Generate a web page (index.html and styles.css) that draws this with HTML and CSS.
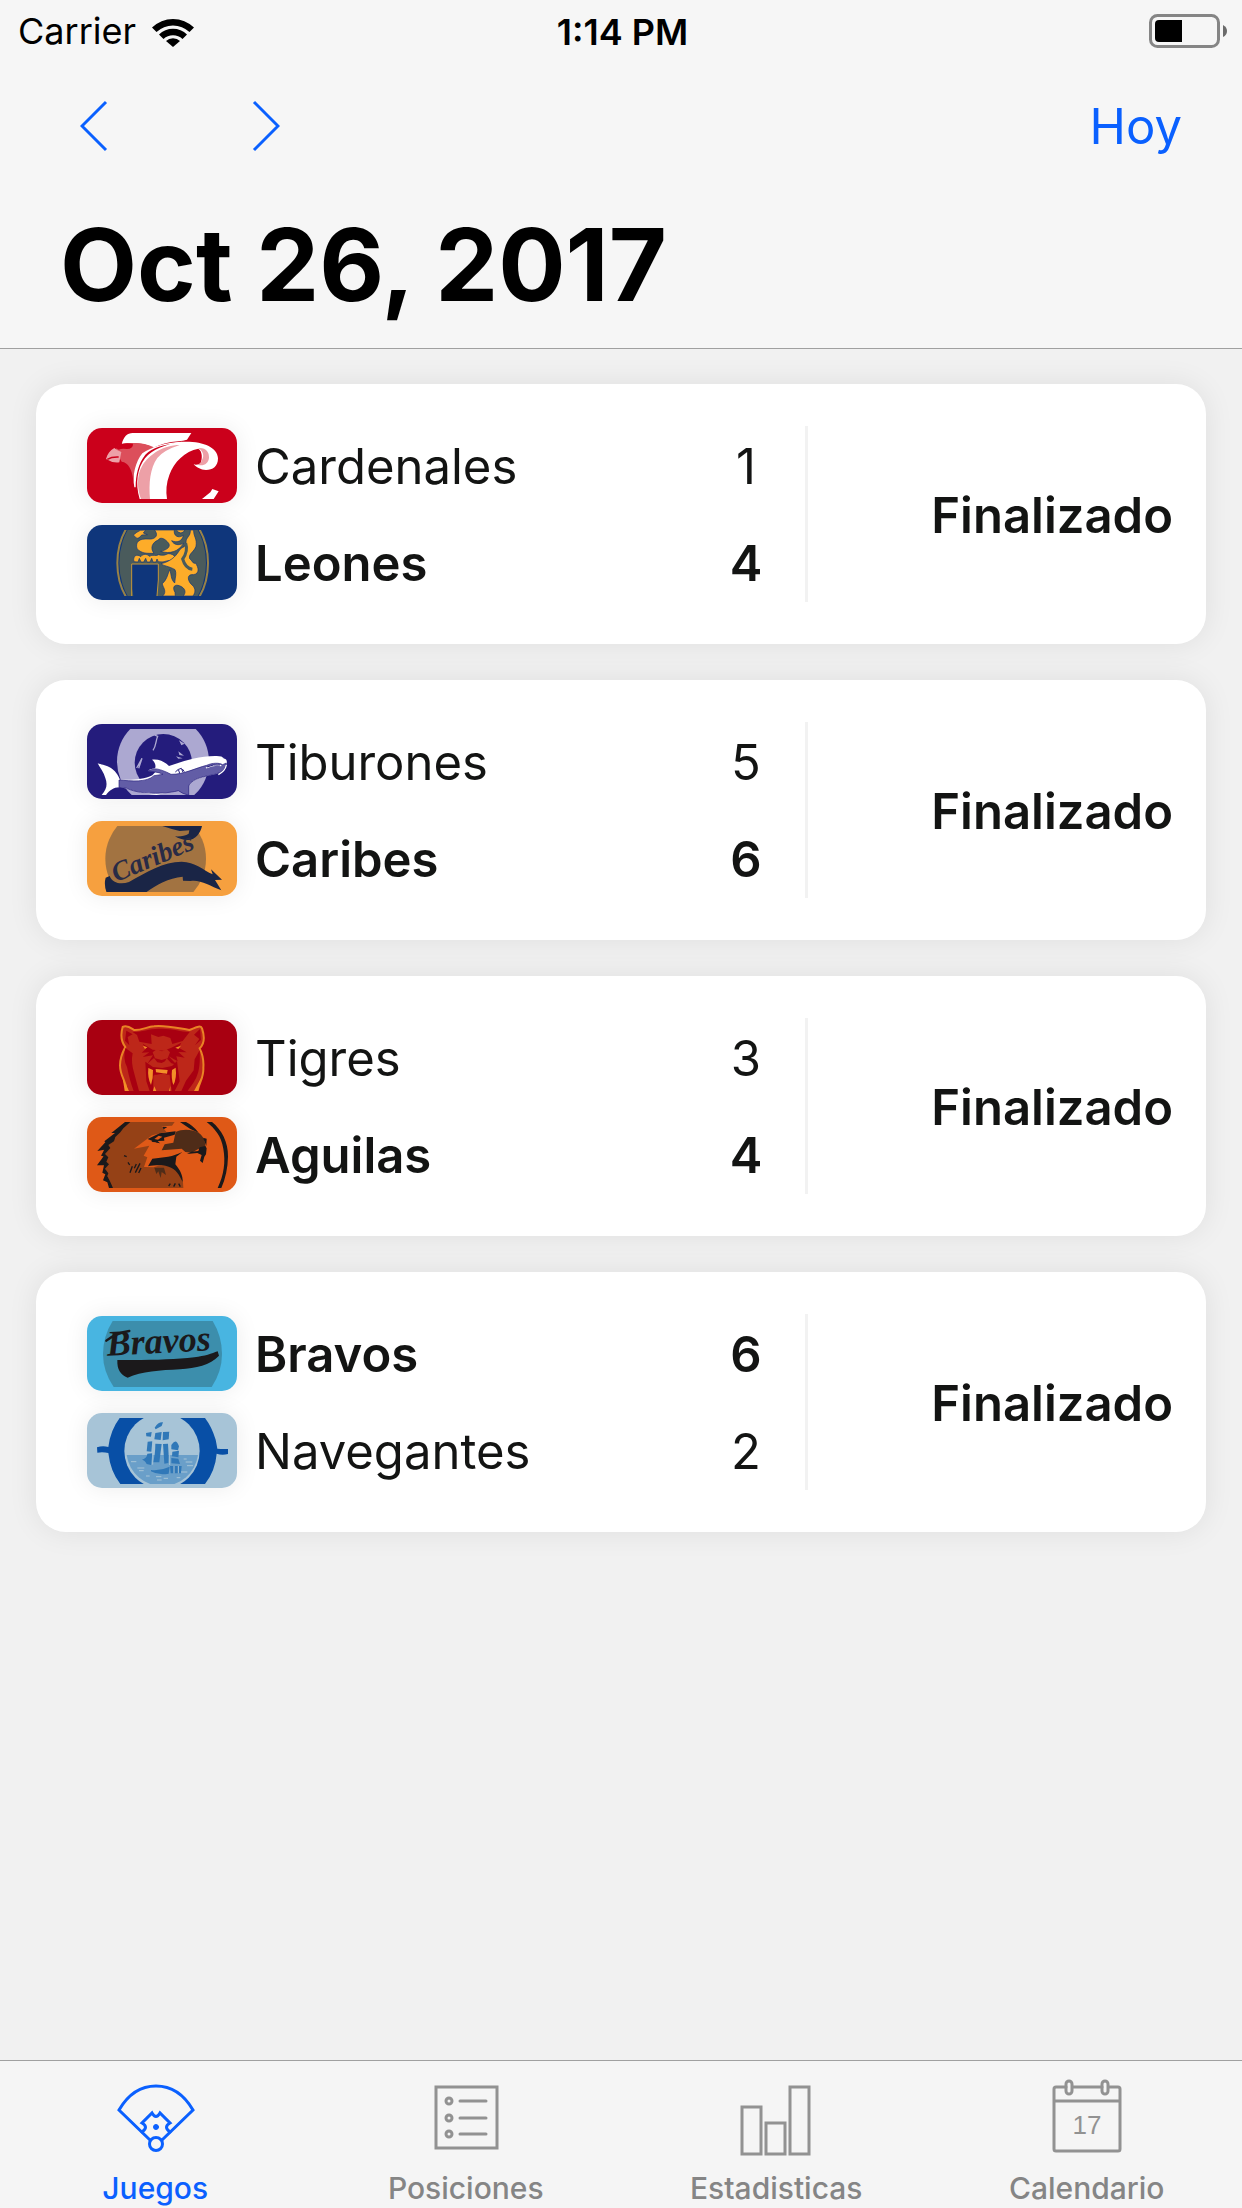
FILE: index.html
```html
<!DOCTYPE html>
<html lang="es">
<head>
  <meta charset="UTF-8">
  <meta name="viewport" content="width=device-width, initial-scale=1.0">
  <title>Juegos</title>
  <link rel="stylesheet" href="styles.css">
</head>
<body>
<header class="header">
  <div class="status-bar">
    <div class="carrier">
      <span>Carrier</span>
      <svg class="wifi" viewBox="0 0 42 31" aria-hidden="true">
        <path d="M0 11.500 A30 30 0 0 1 42 11.500 L37.500 16 A24 24 0 0 0 4.500 16Z"/>
        <path d="M7 18.500 A20 20 0 0 1 35 18.500 L30.500 23 A14 14 0 0 0 11.500 23Z"/>
        <path d="M14 25 A10 10 0 0 1 28 25 L21 31Z"/>
      </svg>
    </div>
    <span class="time">1:14 PM</span>
    <svg class="battery" viewBox="0 0 78 34" aria-hidden="true">
      <rect x="1.500" y="1.500" width="68" height="31" rx="7" fill="none" stroke="#858585" stroke-width="3"/>
      <path d="M10 6 H33 V28 H10 Q6 28 6 24 V10 Q6 6 10 6Z"/>
      <path d="M74 11 Q78 13 78 17 T74 23Z" fill="#6b6b6b"/>
    </svg>
  </div>
  <div class="toolbar">
    <button type="button" class="arrow-button" aria-label="Anterior">
      <svg viewBox="0 0 28 52"><path d="M26 2 L2 26 L26 50"/></svg>
    </button>
    <button type="button" class="arrow-button" aria-label="Siguiente">
      <svg viewBox="0 0 28 52"><path d="M2 2 L26 26 L2 50"/></svg>
    </button>
    <button type="button" class="today-button">Hoy</button>
  </div>
  <h1>Oct 26, 2017</h1>
</header>

<main class="games">
  <article class="game">
    <div class="teams">
      <div class="team">
        <svg class="badge" viewBox="51 54 450 225" aria-hidden="true">
          <rect x="51" y="54" width="450" height="225" fill="#cb001b"/>
          <path fill="#fff" d="M155 104 C160 80 172 69 188 69 H364 L351 89 Q340 93 325 94 C295 96 270 104 250 113 C225 99 185 96 155 104Z"/>
          <path fill="#dc4f5b" d="M148 106 C165 95 225 96 252 112 C225 125 208 145 189 205 C186 180 175 157 155 155 L135 120Z"/>
          <path fill="#cb001b" d="M150 103 Q165 98 189 101 Q190 116 171 117 Q155 114 146 119 L138 114Z"/>
          <path fill="#eda0a7" d="M133 114 Q140 121 154 126 L148 157 Q128 160 108 147 C112 132 120 121 133 114Z"/>
          <path stroke="#cb001b" stroke-width="4" fill="none" d="M112 148 Q125 140 146 141"/>
          <path fill="#fff" d="M217 130 C197 155 186 195 193 232 L197 232 C197 195 205 160 226 134 C250 112 275 104 330 100 L336 95 C285 98 245 110 217 130Z"/>
          <path fill="#fff" d="M330 96 C395 92 442 110 444 145 C444 170 428 180 408 180 C392 179 378 172 371 162 Q384 168 392 160 C397 145 398 125 385 116 C345 124 312 155 298 195 Q285 230 291 267 H209 C195 220 202 175 225 145 C248 117 285 104 330 96Z"/>
          <path fill="#eda0a7" d="M329 105 C280 105 238 134 218 165 C198 195 202 240 213 267 H240 C236 220 240 175 262 144 Q280 121 329 105Z"/>
          <path fill="#eda0a7" d="M385 114 C408 112 418 126 417 144 C415 162 398 172 376 162 Q392 165 396 150 C404 137 399 123 385 114Z"/>
          <path fill="#fff" d="M396 267 L421 247 L427 237 L446 244 L431 267Z"/>
        </svg>
        <span class="name">Cardenales</span>
        <span class="score">1</span>
      </div>
      <div class="team winner">
        <svg class="badge" viewBox="51 345 450 225" aria-hidden="true">
          <clipPath id="leonesClip"><rect x="51" y="360" width="450" height="198"/></clipPath>
          <rect x="51" y="345" width="450" height="225" fill="#0f367b"/>
          <g clip-path="url(#leonesClip)">
            <ellipse cx="278" cy="459" rx="136" ry="172" fill="#0f367b" stroke="#988247" stroke-width="6"/>
            <ellipse cx="278" cy="459" rx="130" ry="168" fill="#4a5b5c"/>
            <g fill="#fdac29" stroke="#0f367b" stroke-width="2">
              <path d="M190 375 Q200 366 211 361 L227 360 L220 369 L232 374 L215 375 Q205 389 198 383Z"/>
              <path d="M254 360 H313 C310 378 325 386 340 376 C337 393 322 400 305 392 C312 405 325 407 341 400 C325 425 300 433 272 424 C293 419 302 410 296 400 C285 385 270 380 265 390 C246 397 240 415 252 430 C232 430 216 432 201 416 C195 395 209 385 234 387 C251 389 269 380 254 360Z"/>
              <path d="M319 360 H345 Q333 378 319 360Z"/>
              <path d="M192 455 C187 437 202 431 212 440 C220 430 232 432 238 439 C248 432 258 440 265 434 C280 438 289 434 294 431 C315 431 319 445 318 456 Q305 447 294 452 Q278 458 265 455 L261 447 L258 456 H249 L245 445 L240 456 H231 L227 445 L221 456 H213 L208 445 L204 456Z"/>
              <path d="M361 360 H371 C370 380 382 385 378 409 C373 425 354 432 359 446 C368 454 370 463 376 459 C386 471 390 492 370 494 C350 492 353 510 362 521 C376 532 379 544 369 558 H340 C352 543 341 530 324 526 C310 524 308 535 315 547 L316 558 H278 C293 544 277 530 277 521 C290 510 292 496 299 479 C305 493 301 506 314 519 C316 500 320 490 315 479 C296 468 280 468 273 461 C300 455 316 441 327 423 C335 408 346 416 348 398 C347 381 362 381 361 360Z"/>
            </g>
            <path d="M347 400 Q355 424 338 447 Q346 475 367 478" fill="none" stroke="#4a5b5c" stroke-width="9"/>
            <path d="M184 462 H266 V510 L261 558 H190 L184 525Z" fill="#0f367b"/>
            <path d="M185 558 V462 H265 V510 L261 558" fill="none" stroke="#c89836" stroke-width="3"/>
          </g>
        </svg>
        <span class="name">Leones</span>
        <span class="score">4</span>
      </div>
    </div>
    <div class="result">Finalizado</div>
  </article>

  <article class="game">
    <div class="teams">
      <div class="team">
        <svg class="badge" viewBox="51 54 450 225" aria-hidden="true">
          <clipPath id="tiburonesClip"><rect x="51" y="69" width="450" height="198"/></clipPath>
          <rect x="51" y="54" width="450" height="225" fill="#241c7c"/>
          <g clip-path="url(#tiburonesClip)">
            <circle cx="279" cy="166" r="138" fill="#aca8d1"/>
            <circle cx="280" cy="170" r="86" fill="#241c7c"/>
            <path d="M200 186 L216 157 L206 187 M249 133 C259 120 257 104 263 91 L254 87" fill="none" stroke="#aca8d1" stroke-width="4"/>
            <path d="M327 103 L344 113 L334 118Z M318 151 L338 157 L325 158Z M325 136 L342 149 L328 147Z" fill="#aca8d1"/>
            <path fill="#fff" d="M83 172 C103 179 132 178 150 221 C185 222 220 222 247 208 L258 196 L234 193 L256 185 C258 174 252 166 246 161 C270 159 284 168 297 180 C340 166 385 149 440 150 C466 151 475 162 469 178 C461 196 446 205 421 208 C385 216 360 227 351 245 L260 267 C221 265 190 252 150 244 C132 243 119 253 108 267 H95 C112 249 112 232 106 216 C102 199 90 186 83 172Z"/>
            <path fill="#625da6" stroke="#241c7c" stroke-width="2" d="M147 222 C185 225 229 230 252 209 L279 205 C265 197 245 197 232 197 L251 188 C267 188 286 196 303 205 C340 206 380 185 410 178 C427 170 448 170 458 176 L469 171 C469 192 447 204 421 208 C388 213 361 225 356 240 V268 Q337 263 325 254 C300 261 220 270 170 247 L147 244Z"/>
            <path fill="none" stroke="#fff" stroke-width="4" d="M408 186 Q433 174 454 179 M445 206 Q466 195 469 177"/>
            <path fill="none" stroke="#241c7c" stroke-width="3" d="M316 198 L325 190 L329 202 M326 190 L334 187 L339 199 M337 189 L343 197"/>
            <path fill="none" stroke="#241c7c" stroke-width="3" d="M411 183 Q430 174 450 177 M458 154 L469 159"/>
          </g>
        </svg>
        <span class="name">Tiburones</span>
        <span class="score">5</span>
      </div>
      <div class="team winner">
        <svg class="badge" viewBox="51 345 450 225" aria-hidden="true">
          <clipPath id="caribesClip"><rect x="51" y="360" width="450" height="198"/></clipPath>
          <rect x="51" y="345" width="450" height="225" fill="#f6a03f"/>
          <g clip-path="url(#caribesClip)">
            <circle cx="257" cy="458" r="151" fill="#a27341"/>
            <path fill="#1a2546" d="M277 360 H396 C392 380 377 402 354 402 C337 402 325 397 315 391 Q340 393 356 383 L358 373 L329 375 Q300 368 277 360Z"/>
            <path fill="#1a2546" d="M107 515 L119 510 C127 531 152 537 177 528 C230 498 280 467 335 467 C375 468 400 492 428 505 L423 490 L456 521 L435 522 L454 553 C420 540 390 520 362 525 L339 524 L338 512 C295 516 255 539 227 560 H110 Q101 536 107 515Z"/>
            <text class="caribes-text" transform="rotate(-23 140 528)" x="138" y="528">Caribes</text>
          </g>
        </svg>
        <span class="name">Caribes</span>
        <span class="score">6</span>
      </div>
    </div>
    <div class="result">Finalizado</div>
  </article>

  <article class="game">
    <div class="teams">
      <div class="team">
        <svg class="badge" viewBox="51 54 450 225" aria-hidden="true">
          <clipPath id="tigresClip"><rect x="51" y="69" width="450" height="198"/></clipPath>
          <rect x="51" y="54" width="450" height="225" fill="#a80011"/>
          <g clip-path="url(#tigresClip)">
            <path fill="#bd2719" stroke="#e98325" stroke-width="6" d="M170 275 C174 240 150 229 150 190 C150 165 158 150 166 135 C153 118 151 99 158 75 C172 68 184 79 192 84 C215 85 232 74 252 73 C285 69 320 78 358 84 C373 79 391 67 396 79 C403 100 405 124 389 139 C397 155 402 171 400 197 C402 229 385 244 381 275Z"/>
            <path fill="#a80011" d="M188 90 C215 91 238 79 270 80 C310 79 330 89 359 90 L338 117 L307 126 L301 108 L280 101 L265 105 L243 97 L245 126 L208 119 L201 99Z"/>
            <path fill="#a80011" d="M169 86 L188 97 L173 105 L178 130 L165 116Z M390 81 L372 98 L388 111 L375 130 L393 114Z M166 138 Q158 171 171 195 Q180 239 191 267 H207 Q199 237 193 215 Q182 181 188 154Z M389 145 L374 172 L371 205 L348 236 L334 267 H353 C375 236 393 220 389 145Z"/>
            <path fill="#a80011" d="M218 125 L248 143 L267 145 L281 146 L304 137 L334 122 L326 137 L350 151 L325 150 L344 167 L319 163 L323 178 L296 163 L320 188 L304 184 L290 169 L285 178 L275 183 L262 181 L252 168 L232 185 L249 160 L218 165 L238 151 L215 152 L227 141Z"/>
            <path fill="#bd2719" d="M248 151 L260 142 L276 148 L290 141 L300 151 L293 169 L275 174 L255 169Z"/>
            <path fill="#a80011" d="M226 179 L249 195 L277 198 L306 192 L321 177 L329 238 L314 267 H305 L299 223 L281 214 L250 221 L250 267 H239 L229 238Z"/>
            <path fill="#bd2719" d="M253 218 H299 V267 H250Z"/>
            <g fill="#f39028">
              <path d="M257 201 L293 204 L291 215 L258 211Z M235 198 L249 204 Q250 229 243 249 Q232 227 235 198Z M306 204 L317 197 Q321 229 310 249 Q303 229 306 204Z M249 267 L253 253 L259 267Z M297 267 L301 252 V267Z"/>
              <path d="M219 131 L232 136 L225 141Z M333 131 L316 137 L325 141Z M158 228 L164 267 H177Z M393 228 L384 267 H372Z"/>
            </g>
          </g>
        </svg>
        <span class="name">Tigres</span>
        <span class="score">3</span>
      </div>
      <div class="team winner">
        <svg class="badge" viewBox="51 345 450 225" aria-hidden="true">
          <rect x="51" y="345" width="450" height="225" fill="#df5917"/>
          <path fill="#954116" d="M174 360 H314 L306 371 L275 373 L289 389 L246 400 L192 440 L238 431 L221 461 L232 466 L222 495 L250 496 Q280 484 316 496 Q341 520 340 558 H125 L108 510 L98 470 L103 426 L132 405Z"/>
          <path fill="#1b191b" d="M165 360 H181 L160 379 L151 391 L136 405 L132 418 L115 429 L121 438 L105 456 L115 466 L109 479 L117 487 L105 500 L115 514 L112 522 L121 540 L129 558 H117 L112 541 L99 535 L106 517 L97 512 L102 490 L81 490 L101 463 L93 461 L103 443 L82 447 L106 421 L103 418 L135 393 L124 393Z"/>
          <path fill="#1b191b" d="M410 360 H426 C455 383 475 421 474 464 Q473 514 454 558 H443 C462 518 467 479 460 440 C454 402 434 379 410 360Z"/>
          <path fill="#4f2c18" d="M317 390 C338 380 365 382 386 392 C407 407 407 429 407 454 L394 452 L386 440 L365 452 L346 450 L335 440 L275 445 L284 427 L310 422Z"/>
          <path fill="#1b191b" d="M330 360 H348 Q370 371 386 392 L361 381Z M233 411 L269 394 L317 388 L314 398 L282 407 L283 416 L263 417 L270 424 L260 422Z M248 411 L254 421 L245 419Z M277 374 L292 375 L281 382Z"/>
          <path fill="#df5917" d="M253 411 L266 401 L277 404 L264 413Z"/>
          <path fill="#1b191b" d="M234 493 L247 470 C280 467 310 464 337 450 L319 464 L316 487 C331 505 339 521 338 540 C328 518 317 500 296 494 C277 488 253 490 234 493Z"/>
          <path fill="#1b191b" d="M389 436 L406 432 L410 439 L408 457 L403 464 L398 483 L390 476 L395 459 L382 453 L351 456 L364 449 L385 447Z M399 407 L410 410 L409 432Z"/>
          <path fill="#4f2c18" d="M253 497 L282 497 L288 519 L275 510 L272 528 L265 508 L259 516Z"/>
          <path fill="none" stroke="#1b191b" stroke-width="4" d="M162 461 L170 464 M174 481 L179 489 M187 493 L180 512 M199 486 L193 499 M210 484 L196 512 M213 498 L206 513 M296 552 L301 545 M311 554 L316 544 M326 545 L331 554"/>
        </svg>
        <span class="name">Aguilas</span>
        <span class="score">4</span>
      </div>
    </div>
    <div class="result">Finalizado</div>
  </article>

  <article class="game">
    <div class="teams">
      <div class="team winner">
        <svg class="badge" viewBox="51 54 450 225" aria-hidden="true">
          <rect x="51" y="54" width="450" height="225" fill="#48b5e1"/>
          <path fill="#3c8eac" d="M128 69 H428 Q456 115 456 168 Q456 220 425 267 H131 Q99 220 99 168 Q99 115 128 69Z"/>
          <path fill="#1b191b" d="M142 186 C240 187 310 185 373 178 C405 174 425 167 443 160 L447 173 C420 202 378 210 330 214 C270 217 215 220 173 239 C151 230 141 215 142 186Z"/>
          <text class="bravos-text" transform="rotate(-3 115 175)" x="112" y="173">Bravos</text>
          <path fill="none" stroke="#1b191b" stroke-width="7" stroke-linecap="round" d="M109 128 Q140 104 178 99"/>
        </svg>
        <span class="name">Bravos</span>
        <span class="score">6</span>
      </div>
      <div class="team">
        <svg class="badge" viewBox="51 345 450 225" aria-hidden="true">
          <clipPath id="navegantesClip"><rect x="51" y="360" width="450" height="198"/></clipPath>
          <rect x="51" y="345" width="450" height="225" fill="#a7c4d7"/>
          <path fill="#084fa6" d="M149 360 H405 Q425 386 437 425 Q440 440 442 452 Q457 454 474 453 V468 Q456 473 440 467 Q436 518 405 558 H151 Q121 520 115 465 Q98 461 82 464 L81 448 Q98 442 115 447 Q121 397 149 360Z"/>
          <g clip-path="url(#navegantesClip)">
            <circle cx="276" cy="459" r="113" fill="#a7c4d7"/>
            <path d="M170 471 H384 A108 108 0 0 1 170 471Z" fill="#6a9fc9"/>
          </g>
          <g fill="#3078b8">
            <path d="M254 389 Q265 371 279 373 L275 384 L257 394Z M228 405 L245 402 L243 416 L229 415Z M256 405 L275 402 L272 426 L253 424Z M279 402 L298 401 L296 424 L278 427Z M233 431 L247 430 L244 461 L230 460Z M256 437 L275 438 L268 493 H249 Q256 470 256 437Z M279 438 L294 437 Q297 469 295 495 L283 497Z M304 441 Q318 418 327 445 L324 457 L304 454Z M307 461 L327 458 L325 478 L306 475Z M232 467 L247 466 L243 501 L230 498 Q224 486 216 485 Q231 480 232 467Z M304 480 L325 482 L330 498 L304 496Z"/>
            <path d="M243 516 Q272 519 299 506 L296 527 Q265 533 243 520Z M300 504 H335 L333 526 H302Z"/>
          </g>
          <g stroke="#a7c4d7" stroke-width="3" fill="none">
            <path d="M312 504 V526 M325 504 V526 M250 401 L248 500 M299 404 V501 M183 491 H199 M202 510 H223 M207 518 H221 M347 492 H367 M351 503 H369 M333 522 H352 M258 536 H274 M281 541 H294 M261 546 H275 M341 483 H350 M228 534 H239 M320 539 H331"/>
          </g>
        </svg>
        <span class="name">Navegantes</span>
        <span class="score">2</span>
      </div>
    </div>
    <div class="result">Finalizado</div>
  </article>
</main>

<nav class="tab-bar">
  <a href="#juegos" class="tab active">
    <svg viewBox="0 0 78 78" aria-hidden="true">
      <path d="M34 57 L3 27 Q17 3 40 3 T77 27 L46 57"/>
      <path d="M26 49 Q33 44 26 40 L36 30 Q40 37 44 30 L54 40 Q47 44 54 49"/>
      <circle cx="40" cy="61" r="6.500"/>
      <circle cx="40" cy="44" r="2.500" fill="currentColor" stroke-width="1"/>
    </svg>
    <span>Juegos</span>
  </a>
  <a href="#posiciones" class="tab">
    <svg viewBox="0 0 78 78" aria-hidden="true">
      <rect x="9" y="4" width="61" height="61"/>
      <circle cx="22" cy="18" r="3"/><circle cx="22" cy="35" r="3"/><circle cx="22" cy="51" r="3"/>
      <path d="M33 18 H59 M33 35 H59 M33 51 H59"/>
    </svg>
    <span>Posiciones</span>
  </a>
  <a href="#estadisticas" class="tab">
    <svg viewBox="0 0 78 78" aria-hidden="true">
      <path d="M5 24 H24 V71 H5Z M29 40 H48 V71 H29Z M53 4 H72 V71 H53Z"/>
    </svg>
    <span>Estadisticas</span>
  </a>
  <a href="#calendario" class="tab">
    <svg viewBox="0 0 78 78" aria-hidden="true">
      <path d="M18 4 H8 Q6 4 6 6 V66 Q6 68 8 68 H70 Q72 68 72 66 V6 Q72 4 70 4 H61 M25 4 H54 M6 18 H72"/>
      <rect x="18" y="-2" width="6" height="13" rx="3"/>
      <rect x="54" y="-2" width="6" height="13" rx="3"/>
      <text class="day" x="39" y="51">17</text>
    </svg>
    <span>Calendario</span>
  </a>
</nav>
</body>
</html>
```
FILE: styles.css
```css
* {
  box-sizing: border-box;
}

body {
  margin: 0;
  min-height: 100vh;
  display: flex;
  flex-direction: column;
  font-family: Inter, "Liberation Sans", sans-serif;
  background-color: #f1f1f1;
  color: #131413;
}

.header {
  background-color: #f6f6f6;
  border-bottom: 1px solid #a0a0a0;
  color: #000;
}

.status-bar {
  display: grid;
  grid-template-columns: 1fr auto 1fr;
  align-items: center;
  height: 60px;
  padding: 0 15px 0 18px;
  font-size: 36px;
  line-height: 60px;
}

.carrier {
  display: flex;
  align-items: center;
  gap: 16px;
}

.wifi {
  width: 42px;
  height: 31px;
}

.time {
  padding-top: 2px;
  font-weight: 600;
}

.battery {
  justify-self: end;
  width: 78px;
  height: 34px;
}

.toolbar {
  display: flex;
  align-items: center;
  gap: 144px;
  height: 132px;
  padding: 0 60px 0 80px;
}

.arrow-button,
.today-button {
  padding: 0;
  border: none;
  background: none;
  color: #0a60ff;
  cursor: pointer;
}

.arrow-button svg {
  display: block;
  width: 28px;
  height: 52px;
  fill: none;
  stroke: currentColor;
  stroke-width: 3;
}

.today-button {
  margin-left: auto;
  font-family: inherit;
  font-size: 49px;
}

h1 {
  margin: 0;
  padding: 13px 60px 23px;
  font-size: 100px;
  font-weight: 700;
  line-height: 120px;
}

.games {
  flex: 1;
  display: flex;
  flex-direction: column;
  gap: 36px;
  padding: 35px 36px;
}

.game {
  display: grid;
  grid-template-columns: 721fr 365fr;
  align-items: center;
  padding: 42px 33px 42px 51px;
  border-radius: 30px;
  background-color: #fff;
  box-shadow: 0 0 30px rgba(0, 0, 0, 0.08);
}

.teams {
  display: flex;
  flex-direction: column;
  gap: 22px;
  padding: 2px 42px 2px 0;
  border-right: 3px solid #f2f2f2;
}

.team {
  display: flex;
  align-items: center;
  gap: 18px;
  font-size: 49px;
  line-height: 72px;
}

.winner,
.result {
  font-weight: 600;
}

.badge {
  flex: none;
  width: 150px;
  height: 75px;
  border-radius: 15px;
  box-shadow: 0 0 24px rgba(0, 0, 0, 0.08);
}

.name {
  flex: 1;
  padding-top: 3px;
}

.score {
  width: 34px;
  padding-top: 3px;
  text-align: center;
}

.result {
  padding-top: 3px;
  font-size: 49px;
  line-height: 60px;
  text-align: right;
}

.caribes-text {
  font: italic 700 82px "Liberation Serif", serif;
  fill: #292b46;
}

.bravos-text {
  font: italic 700 108px "Liberation Serif", serif;
  fill: #1b191b;
}

.tab-bar {
  display: flex;
  height: 148px;
  border-top: 1px solid #a0a0a0;
  background-color: #f5f5f5;
}

.tab {
  flex: 1;
  display: flex;
  flex-direction: column;
  align-items: center;
  padding-top: 22px;
  color: #858585;
  font-size: 30px;
  font-weight: 500;
  line-height: 36px;
  text-decoration: none;
}

.tab svg {
  width: 78px;
  height: 78px;
  margin-bottom: 9px;
  overflow: visible;
  fill: none;
  stroke: #929292;
  stroke-width: 3;
  stroke-linecap: round;
}

.tab.active {
  color: #0a60ff;
}

.tab.active svg {
  stroke: currentColor;
}

.day {
  font: 26px "Liberation Sans", sans-serif;
  text-anchor: middle;
  fill: #929292;
  stroke: none;
}
```
